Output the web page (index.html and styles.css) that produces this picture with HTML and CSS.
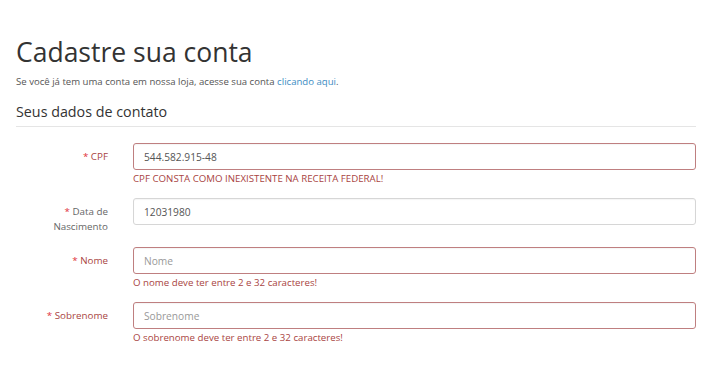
FILE: index.html
```html
<!DOCTYPE html>
<html>
<head>
    <meta charset="utf-8">
    <title>Cadastre sua conta</title>
    <link rel="stylesheet" href="styles.css">
</head>

<body>
    <div class="page">
        <h1 class="title">Cadastre sua conta</h1>
        <p class="intro">Se você já tem uma conta em nossa loja, acesse sua conta <a href="#">clicando aqui</a>.</p>

        <h2 class="section">Seus dados de contato</h2>

        <form class="form">
            <div class="row has-error">
                <label class="label"><span class="req">*</span> CPF</label>
                <div class="field">
                    <input class="input" type="text" value="544.582.915-48">
                    <div class="help">CPF CONSTA COMO INEXISTENTE NA RECEITA FEDERAL!</div>
                </div>
            </div>
            <div class="row">
                <label class="label"><span class="req">*</span> Data de Nascimento</label>
                <div class="field">
                    <input class="input" type="text" value="12031980">
                </div>
            </div>
            <div class="row has-error">
                <label class="label"><span class="req">*</span> Nome</label>
                <div class="field">
                    <input class="input" type="text" placeholder="Nome">
                    <div class="help">O nome deve ter entre 2 e 32 caracteres!</div>
                </div>
            </div>
            <div class="row has-error">
                <label class="label"><span class="req">*</span> Sobrenome</label>
                <div class="field">
                    <input class="input" type="text" placeholder="Sobrenome">
                    <div class="help">O sobrenome deve ter entre 2 e 32 caracteres!</div>
                </div>
            </div>
        </form>
    </div>
</body>
</html>
```

FILE: styles.css
```css
body {
    margin: 0;
    padding: 0;
    background: #fff;
    color: #555;
    font-family: "Open Sans", "Noto Sans", sans-serif;
}

.page {
    padding: 33px 14px 0 16px;
}

.title {
    margin: 0;
    font-size: 26.5px;
    font-weight: 400;
    line-height: 38px;
    color: #333;
}

.intro {
    margin: 4px 0 0;
    font-size: 9.6px;
    line-height: 14px;
    color: #555;
}

.intro a {
    color: #3d8dc4;
    text-decoration: none;
}

.section {
    margin: 12px 0 0;
    padding-bottom: 3px;
    font-size: 14.3px;
    font-weight: 400;
    line-height: 22px;
    color: #333;
    border-bottom: 1px solid #e5e5e5;
}

.form {
    margin-top: 16px;
}

.row {
    display: grid;
    grid-template-columns: 92px 1fr;
    column-gap: 25px;
    margin-bottom: 13px;
}

.label {
    padding-top: 6px;
    text-align: right;
    font-size: 9.8px;
    line-height: 15px;
    color: #666;
}

.req {
    color: #e0313a;
}

.has-error .label {
    color: #a94442;
}

.input {
    display: block;
    box-sizing: border-box;
    width: 100%;
    height: 27px;
    margin: 0;
    padding: 0 10px;
    font-family: inherit;
    font-size: 10.2px;
    color: #555;
    border: 1px solid #d6d6d6;
    border-radius: 3px;
    box-shadow: inset 0 1px 1px rgba(0, 0, 0, 0.04);
    outline: none;
}

.input::placeholder {
    color: #999;
}

.has-error .input {
    border-color: #bf7f80;
}

.help {
    margin-top: 2px;
    font-size: 9.7px;
    line-height: 13px;
    color: #a94442;
}
```
